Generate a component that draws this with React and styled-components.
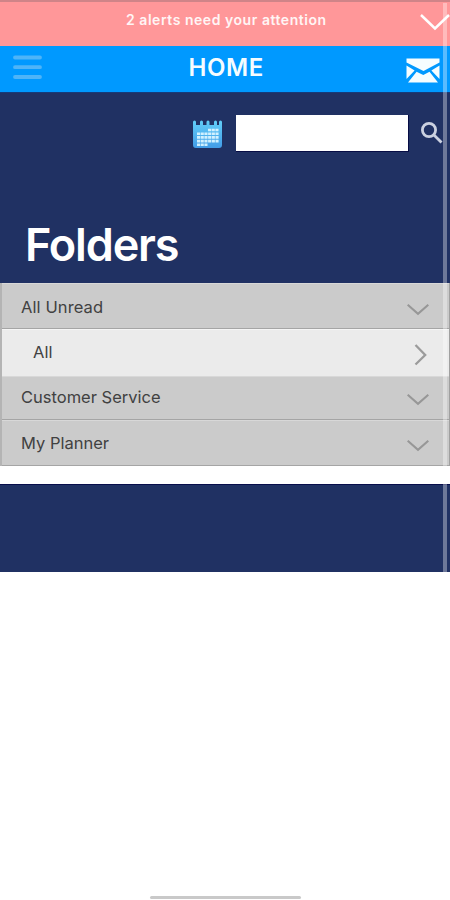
import React from "react";
import styled, { createGlobalStyle } from "styled-components";

const GlobalStyle = createGlobalStyle`
  * { box-sizing: border-box; }
  body { margin: 0; background: #fff; font-family: Inter, "Open Sans", sans-serif; }
`;

const Screen = styled.div`
  position: relative;
  display: flex;
  flex-direction: column;
  width: 450px;
  height: 900px;
  overflow: hidden;
  background: #fff;
`;

const AlertBar = styled.header`
  display: flex;
  justify-content: flex-end;
  flex: none;
  height: 46px;
  padding-top: 11px;
  border-top: 2px solid #cf8488;
  background: #ff9799;
  color: #fff5f5;
`;

const AlertText = styled.span`
  width: 199px;
  margin-right: 95px;
  font: 600 14px/14px Inter, sans-serif;
  letter-spacing: 0.54px;
  white-space: nowrap;
`;

const NavBar = styled.nav`
  display: flex;
  justify-content: space-between;
  flex: none;
  height: 46px;
  padding: 0 10px 0 13px;
  background: #0099ff;
`;

const NavTitle = styled.h1`
  width: 75px;
  margin: 8px 0 0 4px;
  color: #f5fcff;
  font: 600 24px/28px Inter, sans-serif;
  letter-spacing: 0.6px;
  white-space: nowrap;
`;

const Icon = styled.svg`
  display: block;
  flex: none;
  width: ${(p) => p.$w}px;
  height: ${(p) => p.$h}px;
  margin-top: ${(p) => p.$top || 0}px;
  overflow: visible;
`;

const Hero = styled.section`
  display: flex;
  flex-direction: column;
  flex: none;
  height: 191px;
  background: #203163;
  border-top: 1px solid #173b7a;
`;

const SearchRow = styled.div`
  display: flex;
  justify-content: flex-end;
  height: 38px;
  margin-top: 22px;
  padding-right: 8px;
`;

const SearchField = styled.input`
  width: 173px;
  height: 37px;
  margin: 0 12px 0 14px;
  border: 1px solid #070d45;
  border-width: 0 1px 1px 0;
  border-radius: 0;
  background: #fff;
  outline: 0;
`;

const PageTitle = styled.h2`
  margin: 66px 0 0 25px;
  color: #fff;
  font: 600 45px/52px Inter, sans-serif;
  letter-spacing: -1.15px;
`;

const FolderList = styled.ul`
  flex: none;
  margin: 0;
  padding: 0;
  list-style: none;
  border-left: 2px solid #b4b4b4;
  border-right: 1px solid #a0a0a0;
`;

const FolderRow = styled.li`
  display: flex;
  justify-content: space-between;
  height: ${(p) => p.$height}px;
  padding: ${(p) => p.$top}px 20px 0 ${(p) => (p.$nested ? 31 : 19)}px;
  border-bottom: ${(p) => (p.$divider ? "1px solid #a5a5a5" : "0")};
  box-shadow: inset 0 1px ${(p) => (p.$nested ? "#f5f5f5" : "#d8d8d8")};
  background: ${(p) => (p.$nested ? "#ebebeb" : "#cbcbcb")};
`;

const FolderName = styled.span`
  color: #414141;
  font: 400 16.5px/22px Inter, sans-serif;
  letter-spacing: ${(p) => p.$spacing}px;
`;

const FooterPanel = styled.div`
  flex: none;
  height: 88px;
  margin-top: 18px;
  border-top: 1px solid #080e4b;
  background: #203163;
`;

const ScrollTrack = styled.div`
  position: absolute;
  top: 3px;
  right: 3px;
  width: 4px;
  height: 569px;
  background: rgba(255, 255, 255, 0.35);
`;

const HomeIndicator = styled.div`
  width: 151px;
  height: 3px;
  margin: auto auto 1px;
  border-radius: 2px;
  background: #c9c9c9;
`;

const folders = [
  { name: "All Unread", height: 46, top: 13, divider: true, spacing: 0.1 },
  { name: "All", height: 47, top: 12, iconTop: 3, nested: true, spacing: 0 },
  { name: "Customer Service", height: 44, top: 10, divider: true, spacing: 0 },
  { name: "My Planner", height: 46, top: 12, divider: true, spacing: 0 },
];

const MenuIcon = () => (
  <Icon $w={29} $h={26} $top={9} viewBox="0 0 29 26" stroke="#4eb4f8" strokeWidth="3.8" strokeLinecap="round">
    <path d="M2 2.5H27M2 12.2H27M2 22H27" />
  </Icon>
);

const MailIcon = () => (
  <Icon $w={34} $h={25} $top={12} viewBox="0 0 34 25">
    <path fill="#f6fdff" d="M.5 .5H33.5V4.5L17.5 13 .5 4.5ZM.5 7.5 8.6 12.5 .5 21ZM33.5 7.5 25.4 12.5 33.5 21ZM10.6 13.7 17.3 17 23.5 13.7 32 24.5H2Z" />
  </Icon>
);

const CalendarIcon = () => (
  <Icon $w={30} $h={29} $top={5} viewBox="0 0 30 29">
    <defs>
      <linearGradient id="calendarFill" x1="0" x2="0" y1="0" y2="1">
        <stop offset="0" stopColor="#62cdf7" />
        <stop offset="1" stopColor="#429ce7" />
      </linearGradient>
    </defs>
    <path fill="url(#calendarFill)" d="M1 2Q1 .5 2.5 .5T4 2V5H8V2Q8 .5 9.5 .5T11 2V5H14.5V2Q14.5 .5 16 .5T17.5 2V5H22V2Q22 .5 23.5 .5T25 2V5H27V2Q27 .5 28.5 .5T30 2V25Q30 28 27 28H4Q1 28 1 25Z" />
    <path stroke="#d1f1ff" strokeWidth="2.6" strokeDasharray="3.1 .6" d="M16 10H27M5 13.7H27M5 17.4H27M5 21.1H27M5 24.8H16" />
  </Icon>
);

const SearchIcon = () => (
  <Icon $w={21} $h={22} $top={7} viewBox="0 0 21 22" fill="none" stroke="#cbd1e1" strokeWidth="2.8">
    <circle cx="8" cy="8" r="6.6" />
    <path d="M12.7 12.7 20.5 20.5" />
  </Icon>
);

const ChevronDown = ({ top }) => (
  <Icon $w={22} $h={11} $top={top} viewBox="0 0 22 11" fill="none" stroke="#979797" strokeWidth="2.1">
    <path d="M.7 .8 11 9.8 21.3 .8" />
  </Icon>
);

const ChevronRight = ({ top }) => (
  <Icon $w={22} $h={22} $top={top} viewBox="0 0 22 22" fill="none" stroke="#9b9b9b" strokeWidth="2.3">
    <path d="M8.5 1 18.2 11 8.5 20.5" />
  </Icon>
);

export default function App() {
  return (
    <>
      <GlobalStyle />
      <Screen>
        <AlertBar>
          <AlertText>2 alerts need your attention</AlertText>
          <Icon $w={30} $h={16} $top={1} viewBox="0 0 30 16" fill="none" stroke="#fff" strokeWidth="2.5">
            <path d="M1 1 15 14.5 29 1" />
          </Icon>
        </AlertBar>
        <NavBar>
          <MenuIcon />
          <NavTitle>HOME</NavTitle>
          <MailIcon />
        </NavBar>
        <Hero>
          <SearchRow>
            <CalendarIcon />
            <SearchField aria-label="Search" />
            <SearchIcon />
          </SearchRow>
          <PageTitle>Folders</PageTitle>
        </Hero>
        <FolderList>
          {folders.map((f) => (
            <FolderRow key={f.name} $height={f.height} $top={f.top} $nested={f.nested} $divider={f.divider}>
              <FolderName $spacing={f.spacing}>{f.name}</FolderName>
              {f.nested ? <ChevronRight top={f.iconTop} /> : <ChevronDown top={8} />}
            </FolderRow>
          ))}
        </FolderList>
        <FooterPanel />
        <HomeIndicator />
        <ScrollTrack />
      </Screen>
    </>
  );
}
